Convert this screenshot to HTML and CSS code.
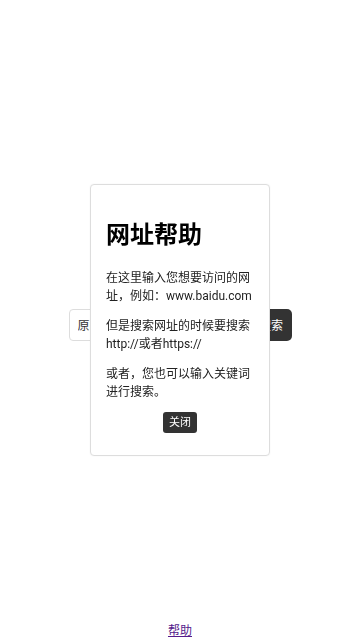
FILE: index.html
```html
<!DOCTYPE html>
<html lang="zh-CN">
<head>
    <meta charset="UTF-8">
    <meta name="viewport" content="width=device-width, initial-scale=1.0">
    <title>网址跳转</title>
    <link rel="stylesheet" href="styles.css">
</head>
<body>
    <div class="main">
        <form class="searchform" onsubmit="return false;">
            <input type="text" class="urlinput" value="原网址或关键词">
            <button type="submit" class="searchbtn">搜索</button>
        </form>
    </div>
    <div class="footer"><a href="#" class="helplink">帮助</a></div>
    <div class="helpbox" id="helpBox">
        <h1>网址帮助</h1>
        <p>在这里输入您想要访问的网址，例如：www.baidu.com</p>
        <p>但是搜索网址的时候要搜索http://或者https://</p>
        <p>或者，您也可以输入关键词进行搜索。</p>
        <div class="closerow"><button type="button" class="closebtn" id="closeBtn">关闭</button></div>
    </div>
    <script>
        document.getElementById('closeBtn').addEventListener('click', function () {
            document.getElementById('helpBox').style.display = 'none';
        });
    </script>
</body>
</html>
```

FILE: styles.css
```css
html, body { margin: 0; height: 100%; }
body { font-family: Roboto, "Noto Sans CJK SC", sans-serif; font-size: 12px; color: #222; background: #fff; display: flex; flex-direction: column; }
.main { flex: 1; display: flex; justify-content: center; align-items: center; padding-top: 28px; }
.searchform { display: flex; gap: 4px; }
.urlinput { width: 178px; height: 32px; box-sizing: border-box; border: 1px solid #ddd; border-radius: 4px; padding: 0 8px; font-family: inherit; font-size: 12px; color: #333; }
.searchbtn { height: 32px; width: 41px; border: none; border-radius: 5px; background: #333; color: #fff; font-family: inherit; font-size: 12px; padding: 0; }
.footer { height: 18px; line-height: 18px; text-align: center; padding-top: 1px; }
.helplink { color: #551a8b; }
.helpbox { position: fixed; left: 90px; top: 184px; width: 148px; padding: 0 15px 8px; background: #fff; border: 1px solid #ddd; border-radius: 4px; box-shadow: 0 0 2px rgba(0,0,0,0.05); }
.helpbox h1 { font-size: 24px; margin: 33px 0 16px; color: #000; line-height: 35px; }
.helpbox p { margin: 12px 0; line-height: 18px; color: #222; }
.closerow { text-align: center; margin-top: -1px; margin-bottom: 14px; }
.closebtn { background: #333; color: #fff; border: none; border-radius: 3px; font-family: inherit; font-size: 11px; padding: 2px 6px; line-height: 17px; }
```
